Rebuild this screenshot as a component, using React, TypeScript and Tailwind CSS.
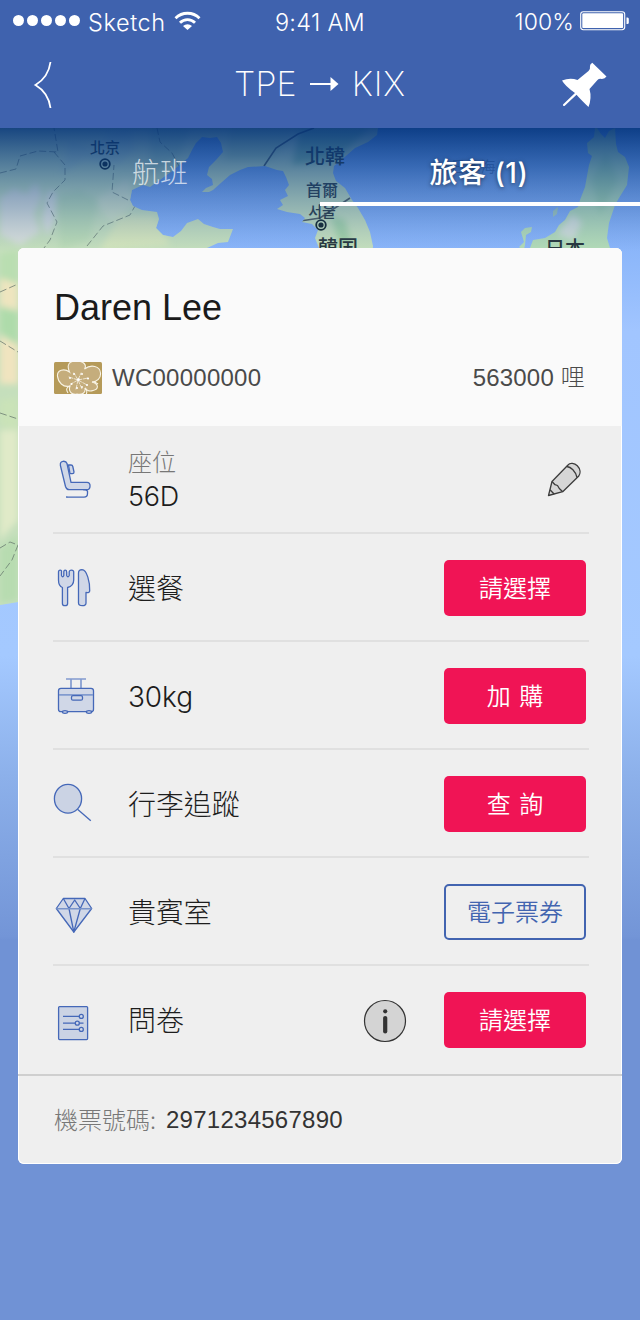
import React from "react";

const sans = "font-['Liberation_Sans','Noto_Sans_CJK_TC',sans-serif]";
const inter = "font-['Inter','Noto_Sans_CJK_TC',sans-serif]";
const cjk = "font-['Noto_Sans_CJK_TC',sans-serif]";

const LAND_MAIN =
  "M0 128H378L377 135L368 142L355 148L347 155L334 166L333 173L336 181L345 188L352 200L358 208L365 220L370 232L373 246L372 262H322L319 248L315 238L318 230L312 224L302 222L305 218L300 214L287 212L277 209L283 205L280 200L288 196L285 190L289 185L286 177L283 171L277 170L265 166L248 167L240 170L230 175L222 182L213 190L209 192L202 192L206 188L213 185L212 179L207 175L209 167L216 160L223 152L221 143L217 137L210 138L202 137L196 143L192 150L188 158L182 163L171 172L157 182L150 187L143 185L132 190L130 200L133 206L142 210L157 212L159 219L156 228L163 235L173 237L181 231L187 223L198 219L204 224L213 227L220 229L233 229L228 242L218 243L207 248L180 270L60 580L18 602L0 605Z";
const LAND_JAPAN =
  "M595 128L594 137L587 143L588 153L592 156L589 165L587 176L585 187L580 200L578 207L570 211L565 220L559 225L555 232L545 238L533 240L530 248L523 250L519 247L524 242L521 232L525 228L532 227L531 232L526 235L525 245L521 262H610V248L607 238L609 223L615 205L619 198L627 185L629 167L625 157L618 152L616 144L615 128L609 131L605 138L601 134L597 128Z";

function MapBackdrop() {
  return (
    <svg className="absolute inset-0 h-[1192px] w-[640px]" viewBox="0 128 640 1192" aria-hidden="true">
      <defs>
        <linearGradient id="sea" gradientUnits="userSpaceOnUse" x1="0" y1="128" x2="0" y2="940">
          <stop offset="0" stopColor="#6f9ff5" />
          <stop offset="0.15" stopColor="#8bb6fa" />
          <stop offset="0.25" stopColor="#a1c5ff" />
          <stop offset="0.65" stopColor="#a4c9ff" />
          <stop offset="0.8" stopColor="#8cb0ea" />
          <stop offset="0.996" stopColor="#7395d7" />
          <stop offset="1" stopColor="#7092d5" />
        </linearGradient>
        <linearGradient id="shade" x1="0" y1="0" x2="0" y2="1">
          <stop offset="0" stopColor="#003178" stopOpacity="0.88" />
          <stop offset="0.3" stopColor="#0b3f86" stopOpacity="0.6" />
          <stop offset="0.65" stopColor="#2c5c9c" stopOpacity="0.32" />
          <stop offset="1" stopColor="#5580b8" stopOpacity="0" />
        </linearGradient>
        <filter id="soft" x="-20%" y="-20%" width="140%" height="140%">
          <feGaussianBlur stdDeviation="3" />
        </filter>
        <clipPath id="land">
          <path d={LAND_MAIN} />
          <path d={LAND_JAPAN} />
        </clipPath>
      </defs>
      <rect x="0" y="128" width="640" height="1192" fill="url(#sea)" />
      <path d={LAND_MAIN} fill="#c5dfbc" />
      <path d={LAND_JAPAN} fill="#b3dbb6" />
      <g clipPath="url(#land)">
        <g filter="url(#soft)">
          <path d="M0 198L14 188L26 194L36 182L42 196L34 214L40 232L20 245L0 235Z" fill="#d9dfda" />
          <path d="M48 190L56 192L54 222L47 236L42 220Z" fill="#dbe0de" />
          <path d="M70 140L95 150L110 132L130 128L134 150L118 165L85 160L60 175Z" fill="#b9d4c0" />
          <path d="M95 200L128 178L135 205L110 222Z" fill="#d3e3c6" />
          <path d="M58 195L80 190L98 200L90 240L60 250Z" fill="#b9dab4" />
          <path d="M150 128L190 128L180 155L150 175Z" fill="#b0d1b4" />
          <path d="M120 215L155 216L170 245L100 250Z" fill="#d6e6bb" />
          <path d="M230 128L300 128L270 160L225 160Z" fill="#b3d3ae" />
          <path d="M300 128H370L335 160L292 165Z" fill="#8fbf9c" />
          <path d="M330 215L345 220L352 245L340 245Z" fill="#a3d2a4" />
          <path d="M0 254L18 250V300L0 310Z" fill="#b9deb1" />
          <path d="M0 278L18 284V310L0 306Z" fill="#eee5bf" />
          <path d="M0 308L18 312V345L0 332Z" fill="#aedbaa" />
          <path d="M0 336L18 345V384H0Z" fill="#f0e4bf" />
          <path d="M0 400L18 398V430L0 425Z" fill="#cae3b8" />
          <path d="M0 430L18 430V520L0 540Z" fill="#e0eac8" />
          <path d="M0 548L18 535V600L0 603Z" fill="#b7dcb0" />
          <path d="M592 180L606 150L618 180L600 215Z" fill="#a2d2a8" />
          <path d="M557 234L572 214L582 222L574 240Z" fill="#d3dfd8" />
        </g>
        <g fill="none" stroke="#5f7068" strokeOpacity="0.7" strokeWidth="1" strokeDasharray="7 3">
          <path d="M0 173L16 169L20 156L38 151L58 152L54 128M54 152L65 165V180L53 192L47 203L57 222L50 240L44 248M87 246L103 226L130 215L135 206M128 200L112 192L114 165M157 128L160 142L172 153L180 168" />
          <path d="M0 292L18 284M0 341L18 352M0 413L18 419M0 548L10 542L18 545L12 560L0 576" />
        </g>
        <path d="M314 128L298 134L276 148L264 166M292 222L307 220L320 218L350 198" fill="none" stroke="#4b5759" strokeWidth="1.6" />
      </g>
      <path d="M553 211L558 207L557 214L553 217Z" fill="#a2c9bd" />
      <g className={cjk} fill="#26343a" fontWeight="500" textAnchor="middle">
        <text x="105" y="153" fontSize="15">北京</text>
        <text x="325" y="164" fontSize="20">北韓</text>
        <text x="322" y="196" fontSize="16">首爾</text>
        <text x="322" y="217" fontSize="15" className="font-['Noto_Sans_CJK_KR',sans-serif]">서울</text>
        <text x="338" y="255" fontSize="20">韓国</text>
        <text x="565" y="256" fontSize="20">日本</text>
        <text x="473" y="172" fontSize="15" fontWeight="400" fill="#3f68b0" fillOpacity="0.8">日本海</text>
      </g>
      <g fill="none" stroke="#0e2026" strokeWidth="1.8">
        <circle cx="105" cy="164" r="4.8" />
        <circle cx="321" cy="225" r="4.8" />
      </g>
      <circle cx="105" cy="164" r="2.6" fill="#0e2026" />
      <circle cx="321" cy="225" r="2.6" fill="#0e2026" />
      <rect x="0" y="128" width="640" height="124" fill="url(#shade)" />
    </svg>
  );
}

function StatusBar() {
  return (
    <div className={`grid h-11 grid-cols-3 items-center leading-none ${inter} font-[350]`}>
      <div className="flex items-center pl-[13px]">
        <div className="flex gap-[3px]">
          {[0, 1, 2, 3, 4].map((i) => (
            <span key={i} className="mt-[-4px] size-[11px] rounded-full bg-white" />
          ))}
        </div>
        <span className="ml-[8px] w-[86px] pt-[1px] text-[23.5px] tracking-[0.6px]">Sketch</span>
        <svg className="mt-[-3px]" width="28" height="20" viewBox="0 0 28 20" fill="none" stroke="#fff" strokeWidth="2.8">
          <path d="M1.500 7.200A17 17 0 0 1 25.500 7.200M6 11.800A10.500 10.500 0 0 1 21 11.800" />
          <path d="M9 15A7 7 0 0 1 18 15L13.500 19Z" fill="#fff" stroke="none" />
        </svg>
      </div>
      <span className="pt-[1px] text-center text-[23.5px] tracking-[0.3px]">9:41 AM</span>
      <div className="flex items-center justify-end pr-[10px]">
        <span className="pt-[1px] text-[23px] tracking-[0.1px]">100%</span>
        <svg className="ml-[6px] mt-[-2px]" width="50" height="20" viewBox="0 0 50 20">
          <rect x="0.700" y="0.700" width="44" height="18" rx="2.600" fill="none" stroke="#fff" strokeWidth="1.100" />
          <rect x="2.300" y="2.300" width="40.800" height="14.800" rx="1.200" fill="#fff" />
          <path d="M46.500 6.500H47.500Q48.800 6.500 48.800 8V11.500Q48.800 13 47.500 13H46.500Z" fill="#fff" />
        </svg>
      </div>
    </div>
  );
}

function NavBar() {
  return (
    <div className="flex h-[84px] items-center justify-between px-[32px] pb-[5px]">
      <svg width="48" height="50" viewBox="32 58 48 50" fill="none" stroke="#fff" strokeWidth="1.8">
        <path d="M50.500 61C49 72 43 79.500 35.500 84C43 88.500 49 95.500 50.500 107" />
      </svg>
      <h1 className={`flex items-center text-[34px] font-extralight leading-none ${inter}`}>
        <span className="tracking-[0.1px]">TPE</span>
        <svg className="mx-[13px]" width="29" height="16" viewBox="0 0 29 16">
          <path d="M0 8H22" stroke="#fff" strokeWidth="2" />
          <path d="M20.500 1L28.500 8L20.500 15Z" fill="#fff" />
        </svg>
        <span className="tracking-[0.9px]">KIX</span>
      </h1>
      <svg width="48" height="50" viewBox="560 58 48 50" fill="#fff">
        <path d="M592.300 61.700Q590 63 590 65Q590.500 68 588.500 70L577.500 79Q570 76.500 562 79.500Q565 85 575 92L563 103.500Q562.700 105.500 564.500 105L576.500 93.800Q581 99 588.500 106Q592 97 589.500 88L597.500 79Q599 77.300 602 78Q605 77.500 606.500 75.500Z" />
      </svg>
    </div>
  );
}

const lineArt = { fill: "#d0d7e7", stroke: "#4568b8", strokeWidth: 1.3, strokeLinejoin: "round" as const };

function Icon({ children }: { children: React.ReactNode }) {
  return (
    <svg className="shrink-0 overflow-visible" width="42" height="42" viewBox="0 0 42 42" {...lineArt}>
      {children}
    </svg>
  );
}

const SeatIcon = () => (
  <Icon>
    <path d="M15.500 7H18Q19.500 7 19.800 8.500L21 14Q21 15.700 19.500 15.700H17Z" />
    <path d="M7.400 7.500C6.500 2 13 2.500 14 5.500L18 24.300H34C38.300 24.300 37.800 31.700 34 31.700H16C14.200 31.700 13 30 12.500 28.500Z" />
    <path d="M13.500 39.200H31Q34.500 39.200 34.500 35.500V33Q33.500 31.700 30 31.700" fill="none" />
    <circle cx="13.700" cy="39" r="0.700" fill="#4568b8" stroke="none" />
  </Icon>
);

const MealIcon = () => (
  <Icon>
    <path d="M5.500 5Q5.500 3.200 7.200 3.200T8.500 5V8.500Q9.700 11 10.800 8.500V5Q10.800 3.200 12.200 3.200T13.700 5V8.500Q15 11 16.200 8.500V5Q16.200 3.200 18.500 3.200T20.700 5V13Q20.700 19 14.600 20.500V36.500Q14.600 38.700 12 38.700T9.400 36.500V20.500Q5.500 19 5.500 13Z" />
    <path d="M25.500 6Q25.500 2.700 29 2.700C34 3 37 15 36.700 24Q36.500 26 33 25.500V36Q33 38.700 29.300 38.700T25.500 36Z" />
  </Icon>
);

const BaggageIcon = () => (
  <Icon>
    <path d="M13 4H33M18 4V13M28 4V13" strokeWidth="1.700" stroke="#829bcf" />
    <rect x="5.500" y="13.300" width="35" height="23.400" rx="2.500" />
    <path d="M6 19.800H40" strokeWidth="1.700" stroke="#829bcf" />
    <rect x="18.500" y="20.700" width="11" height="4.500" rx="1.500" />
    <ellipse cx="12" cy="37" rx="2.600" ry="1.300" />
    <ellipse cx="36" cy="37" rx="2.600" ry="1.300" />
  </Icon>
);

const TraceIcon = () => (
  <Icon>
    <ellipse cx="15" cy="15.700" rx="13.600" ry="14.400" fill="#cbd3e4" />
    <path d="M24.500 26.300L37.800 37.700" />
  </Icon>
);

const LoungeIcon = () => (
  <Icon>
    <path d="M10.300 7.500H32L38.700 17.500L20.800 41L3.300 17.500Z" />
    <path d="M10.300 7.500L16 17.500L21.700 9L27.300 17.500L32 7.500M16 17.500L20.800 41L27.300 17.500" fill="none" />
    <path d="M3.300 17.700H38.700" stroke="#7893ca" strokeWidth="1.600" />
  </Icon>
);

const SurveyIcon = () => (
  <Icon>
    <rect x="5.600" y="7.600" width="29" height="33" rx="1" fill="#cbd3e4" />
    <path d="M10 17.400H26.500M10 24.200H22.500M26 24.200H30.500M10 30.400H26.500" />
    <circle cx="28.300" cy="17.400" r="2" />
    <circle cx="24.300" cy="24.200" r="2" />
    <circle cx="28.300" cy="30.400" r="2" />
  </Icon>
);

function PencilIcon() {
  return (
    <svg width="34" height="35" viewBox="547 461 34 35" fill="#d6d6d6" stroke="#3c3c3c" strokeWidth="1.300" strokeLinejoin="round">
      <path d="M548.500 494.500L552 480.500L568 464C570 461.500 574.500 462 577.300 464.800C580.300 467.800 580.800 472 578.800 475L562.700 490.700Z" />
      <path d="M552 480.500L555 483.700L557.500 484.500L559.300 487.500L562.700 490.700M566.800 465.500C571 466 575.500 470 577 476.500M550 488.700L554.300 493.200" fill="none" />
    </svg>
  );
}

function InfoIcon() {
  return (
    <svg className="mr-[37px] mt-[2px]" width="44" height="44" viewBox="0 0 44 44">
      <circle cx="22" cy="22" r="20.500" fill="#d4d4d4" stroke="#333" strokeWidth="1.200" />
      <circle cx="22.200" cy="12.300" r="2.100" fill="#333" />
      <path d="M22.200 19V32.500" stroke="#333" strokeWidth="4.200" strokeLinecap="round" />
    </svg>
  );
}

function PlumBadge() {
  return (
    <svg width="48" height="32" viewBox="0 0 48 32">
      <defs>
        <clipPath id="badge">
          <rect width="48" height="32" rx="1.500" />
        </clipPath>
      </defs>
      <g clipPath="url(#badge)">
        <rect width="48" height="32" fill="#b59a59" />
        <g fill="#c5ad7c" stroke="#f8f3e4" strokeWidth="1.100">
          <path d="M15.500 10C12 2 16 -1 22 -1C30 -1 33 3 30.500 7C37 2 46 4 46.500 11C47 16 43 20 38 20C45 22 45 27 39 28.500C35 30 32 28 31 26C32 31 28 33 23 32C18 33 14 30 16 24C9 26 4 20 3.500 14C3 8 10 6 15.500 10Z" />
          <path d="M16 24C12 25 12 28 14 31M31 26Q34 28 32 33M38 20Q42 20 44 22" fill="none" />
        </g>
        <g stroke="#fbf8ef" strokeWidth="0.700" strokeLinecap="round">
          <path d="M24 18L20 11M24 18L27 11M24 18L15 15M24 18L34 16M24 18L33 23M24 18L28 27M24 18L22 27M24 18L17 22" strokeDasharray="4 1.500" />
        </g>
        <g fill="#fff">
          <circle cx="20" cy="12" r="1" /><circle cx="28" cy="12" r="1" /><circle cx="16" cy="16" r="1" />
          <circle cx="34" cy="16.500" r="1.100" /><circle cx="33" cy="23" r="1.100" /><circle cx="23" cy="26" r="1" />
          <circle cx="17.500" cy="22" r="1.100" /><circle cx="28" cy="25" r="0.900" /><circle cx="24.500" cy="17.500" r="1.300" />
        </g>
      </g>
    </svg>
  );
}

function ActionButton({ label, outline = false }: { label: string; outline?: boolean }) {
  const tone = outline
    ? "border-2 border-[#4264b0] text-[#4264b0]"
    : "bg-[#f01455] text-white";
  return (
    <button className={`flex h-14 w-[142px] items-center justify-center rounded-[5px] pb-[3px] text-[24px] font-[350] leading-none [word-spacing:3px] ${cjk} ${tone}`}>
      {label}
    </button>
  );
}

type RowProps = {
  icon: React.ReactNode;
  title: string;
  action: React.ReactNode;
  last?: boolean;
};

function Row({ icon, title, action, last = false }: RowProps) {
  const frame = last
    ? "h-[110px] border-b-2 border-[#cfcfcf] pl-[35px] pr-[36px]"
    : "ml-[35px] mr-[33px] h-[108px] border-b-2 border-[#e0e0e0] pt-[2px] pr-[3px]";
  return (
    <li className={`flex items-center ${frame}`}>
      {icon}
      <span className={`ml-[33px] flex-1 pt-[2px] text-[28px] font-light leading-none tracking-[-0.1px] text-[#1d1d1d] ${inter}`}>{title}</span>
      {action}
    </li>
  );
}

export default function App() {
  return (
    <div className="flex h-[1320px] w-[640px] flex-col overflow-hidden bg-[#7092d5]">
      <header className="h-32 shrink-0 bg-[#3f62ae] text-white">
        <StatusBar />
        <NavBar />
      </header>
      <main className="relative flex-1">
        <MapBackdrop />
        <div className="relative flex flex-col">
          <nav className={`grid h-[78px] grid-cols-2 text-center text-[28px] ${inter}`}>
            <a className="pt-[24px] font-light leading-[42px] text-white/70">航班</a>
            <a className="border-b-4 border-white pt-[24px] pr-[2px] font-medium leading-[42px] tracking-[0.5px] text-white [text-shadow:0_1px_4px_rgba(0,0,0,0.5)]">
              旅客 (1)
            </a>
          </nav>
          <section className="mx-[18px] mt-[42px] flex flex-col overflow-hidden rounded-[6px] bg-[#efefef] shadow-[inset_0_0_0_1px_#fff]">
            <div className="flex h-[178px] flex-col bg-[#fafafa] pl-[36px] pr-[37px] pt-[38px]">
              <h2 className={`text-[36px] leading-[44px] text-[#1a1a1a] ${sans}`}>Daren Lee</h2>
              <div className={`mt-[32px] flex h-[32px] items-center text-[24px] text-[#4a4a4a] ${sans}`}>
                <PlumBadge />
                <span className="ml-[10px] flex-1 leading-none tracking-[0.25px]">WC00000000</span>
                <span className="font-light leading-none tracking-[0.2px]">563000 哩</span>
              </div>
            </div>
            <ul className="flex flex-col">
              <li className="ml-[35px] mr-[33px] flex h-[108px] items-center border-b-2 border-[#e0e0e0] pr-[8px]">
                <SeatIcon />
                <div className={`ml-[33px] flex flex-1 flex-col pt-[1px] font-light ${inter}`}>
                  <span className="text-[24px] leading-[34px] text-[#777]">座位</span>
                  <span className="text-[27px] leading-[34px] tracking-[-0.3px] text-[#1d1d1d]">56D</span>
                </div>
                <PencilIcon />
              </li>
              <Row icon={<MealIcon />} title="選餐" action={<ActionButton label="請選擇" />} />
              <Row icon={<BaggageIcon />} title="30kg" action={<ActionButton label="加 購" />} />
              <Row icon={<TraceIcon />} title="行李追蹤" action={<ActionButton label="查 詢" />} />
              <Row icon={<LoungeIcon />} title="貴賓室" action={<ActionButton label="電子票券" outline />} />
              <Row
                last
                icon={<SurveyIcon />}
                title="問卷"
                action={
                  <>
                    <InfoIcon />
                    <ActionButton label="請選擇" />
                  </>
                }
              />
            </ul>
            <footer className="flex h-[88px] items-center pl-[36px] text-[24px] leading-none">
              <span className={`pb-[2px] font-light text-[#777] ${cjk}`}>機票號碼:</span>
              <span className={`ml-[10px] tracking-[0.26px] text-[#333] ${sans}`}>2971234567890</span>
            </footer>
          </section>
        </div>
      </main>
    </div>
  );
}
